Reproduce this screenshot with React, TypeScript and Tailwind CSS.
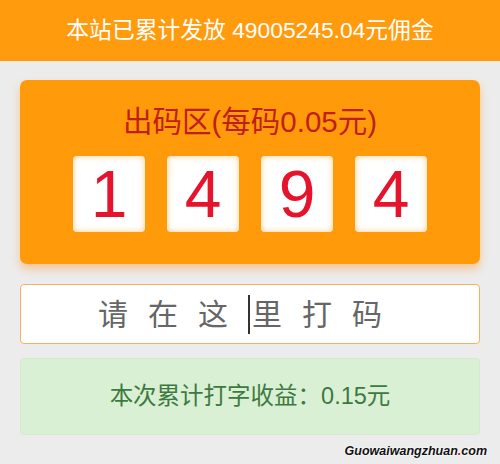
import React from "react";

const CJK = "font-['Liberation_Sans','Noto_Sans_CJK_SC',sans-serif]";

function DigitBox({ d }: { d: string }) {
  return (
    <div className="flex h-[76px] w-[72px] items-center justify-center rounded-[4px] bg-white shadow-[inset_0_0_6px_rgba(255,170,60,0.6)]">
      <span className="font-['Liberation_Sans',sans-serif] text-[66px] leading-none text-[#e5132b]">{d}</span>
    </div>
  );
}

export default function App() {
  const code = ["1", "4", "9", "4"];
  return (
    <div className={`relative h-[464px] w-[500px] overflow-hidden bg-[#ececec] ${CJK}`}>
      <div className="flex h-[61px] items-center justify-center bg-[#ff9b0d] text-[22.8px] text-white">
        本站已累计发放 49005245.04元佣金
      </div>

      <div className="flex flex-col gap-[20px] px-[20px] pt-[19px]">
        <div className="flex h-[184px] flex-col items-center rounded-[7px] bg-[#ff9b0b] pt-[25px] shadow-[0_5px_8px_rgba(255,150,40,0.45)]">
          <div className="text-[29.5px] leading-[34px] text-[#bf1f18]">出码区(每码0.05元)</div>
          <div className="mt-[17px] flex gap-[22px]">
            {code.map((d, i) => (
              <DigitBox key={i} d={d} />
            ))}
          </div>
        </div>

        <div className="flex h-[60px] items-center justify-center rounded-[4px] border border-[#f6b163] bg-white text-[30px] tracking-[20px] text-[#666666]">
          请在这<span className="mr-[2px] inline-block h-[39px] w-[2px] bg-[#333333] align-middle" />里打码
        </div>

        <div className="-mt-[6px] flex h-[77px] items-center justify-center rounded-[4px] border border-[#d3ebcc] bg-[#daf0d5] text-[23.5px] text-[#3d7a3f]">
          本次累计打字收益：0.15元
        </div>
      </div>

      <div className="absolute right-[13px] top-[442px] font-['Liberation_Sans',sans-serif] text-[12.5px] font-bold italic text-[#111111] [text-shadow:0_0_2px_#fff,0_0_2px_#fff]">
        Guowaiwangzhuan<span className="text-[#c8102e]">.</span>com
      </div>
    </div>
  );
}
